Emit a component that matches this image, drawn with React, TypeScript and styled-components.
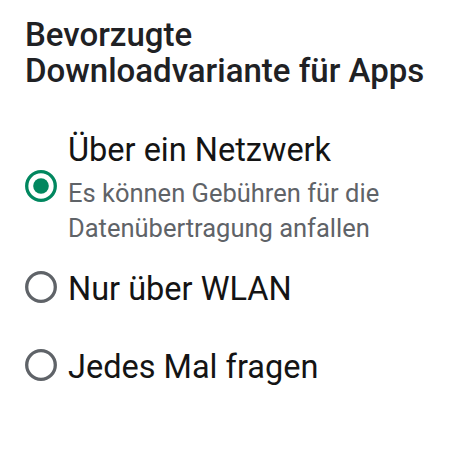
import React, { useState } from 'react';
import styled, { createGlobalStyle } from 'styled-components';

const GlobalStyle = createGlobalStyle`
  html, body {
    margin: 0;
    padding: 0;
    background: #fff;
  }
  body {
    font-family: Roboto, 'Noto Sans', sans-serif;
  }
`;

const Page = styled.div`
  width: 450px;
  height: 450px;
  box-sizing: border-box;
  padding: 17px 0 0 25px;
  background: #fff;
  overflow: hidden;
`;

const Heading = styled.h1`
  margin: 0 0 37px;
  color: #202124;
  font-size: 33px;
  font-weight: 500;
  line-height: 36px;
  letter-spacing: 0;
`;

const OptionList = styled.div`
  display: flex;
  flex-direction: column;
`;

const Option = styled.label`
  display: flex;
  align-items: center;
  gap: 11px;
  min-height: 78px;
  padding: 4px 0;
  box-sizing: border-box;
  cursor: pointer;
`;

const RadioMark = styled.svg`
  flex: none;
  width: 32px;
  height: 32px;
  margin-bottom: 5px;
`;

const OptionText = styled.div`
  display: flex;
  flex-direction: column;
`;

const OptionTitle = styled.div`
  color: #141414;
  font-size: 32.5px;
  font-weight: 400;
  line-height: 40px;
`;

const OptionHint = styled.div`
  margin-top: 6px;
  color: #5f6368;
  font-size: 25.5px;
  line-height: 35px;
  max-width: 330px;
`;

type Choice = { id: string; title: string; hint?: string };

const choices: Choice[] = [
  {
    id: 'any',
    title: 'Über ein Netzwerk',
    hint: 'Es können Gebühren für die Datenübertragung anfallen',
  },
  { id: 'wifi', title: 'Nur über WLAN' },
  { id: 'ask', title: 'Jedes Mal fragen' },
];

const Radio: React.FC<{ checked: boolean }> = ({ checked }) => (
  <RadioMark viewBox="0 0 32 32">
    <circle
      cx="16"
      cy="16"
      r="14.3"
      fill="none"
      stroke={checked ? '#01875f' : '#5f6368'}
      strokeWidth="3.3"
    />
    {checked && <circle cx="16" cy="16" r="7.8" fill="#01875f" />}
  </RadioMark>
);

export default function App() {
  const [selected, setSelected] = useState('any');

  return (
    <Page>
      <GlobalStyle />
      <Heading>
        Bevorzugte
        <br />
        Downloadvariante für Apps
      </Heading>
      <OptionList>
        {choices.map((c) => (
          <Option key={c.id} onClick={() => setSelected(c.id)}>
            <Radio checked={selected === c.id} />
            <OptionText>
              <OptionTitle>{c.title}</OptionTitle>
              {c.hint && <OptionHint>{c.hint}</OptionHint>}
            </OptionText>
          </Option>
        ))}
      </OptionList>
    </Page>
  );
}
